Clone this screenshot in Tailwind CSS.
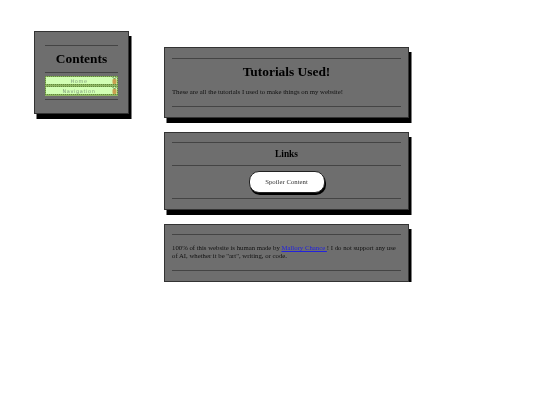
<!DOCTYPE html>
<html lang="en">
<head>
    <meta charset="UTF-8">
    <title>Tutorials Used</title>
    <script src="https://cdn.jsdelivr.net/npm/@tailwindcss/browser@4"></script>
</head>
<body class="bg-white text-black font-['Liberation_Serif',serif] text-[6.75px] leading-[8px]">
    <div class="flex items-start pl-[34px] pt-[31px] blur-[0.3px]">

        <!-- Sidebar -->
        <aside class="w-[95px] h-[83px] px-[10px] pt-[13px] bg-[#6e6e6e] border border-[#333333] shadow-[2.5px_5px_0_#000]">
            <div class="h-px bg-[#444444]"></div>
            <h2 class="h-[26px] flex items-center justify-center text-[13.4px] font-bold text-black">Contents</h2>
            <div class="h-px bg-[#444444]"></div>
            <nav class="flex flex-col gap-px pb-px mt-[3px] mb-[3px] bg-[#8fb563]">
                <a class="h-[9px] pr-[5px] flex items-center justify-center relative bg-[#d2ffb4] bg-clip-padding border border-dotted border-[#5f8a3a] text-[#7f9a7c] font-['DejaVu_Sans',sans-serif] text-[5px] tracking-[0.6px]">Home
                    <svg class="absolute right-0 top-0 w-[5px] h-[7px]" viewBox="0 0 5 7"><path d="M0.5 0L2.5 2L4.5 0" fill="none" stroke="#4d6b30" stroke-width="0.8"/><rect x="0.5" y="2" width="4" height="5" rx="1" fill="#c9a050"/></svg>
                </a>
                <a class="h-[9px] pr-[5px] flex items-center justify-center relative bg-[#d2ffb4] bg-clip-padding border border-dotted border-[#5f8a3a] text-[#7f9a7c] font-['DejaVu_Sans',sans-serif] text-[5px] tracking-[0.6px]">Navigation
                    <svg class="absolute right-0 top-0 w-[5px] h-[7px]" viewBox="0 0 5 7"><path d="M0.5 0L2.5 2L4.5 0" fill="none" stroke="#4d6b30" stroke-width="0.8"/><rect x="0.5" y="2" width="4" height="5" rx="1" fill="#c9a050"/></svg>
                </a>
            </nav>
            <div class="h-px bg-[#444444]"></div>
        </aside>

        <!-- Main column -->
        <main class="w-[245px] ml-[35px] mt-[16px] flex flex-col gap-[14px]">
            <section class="h-[71px] px-[7px] pt-[10px] bg-[#6e6e6e] border border-[#333333] shadow-[2.5px_5px_0_#000]">
                <div class="h-px bg-[#444444]"></div>
                <h1 class="h-[26px] flex items-center justify-center text-[13.4px] font-bold text-black">Tutorials Used!</h1>
                <p class="mt-[3px] text-[#111111]">These are all the tutorials I used to make things on my website!</p>
                <div class="h-px bg-[#444444] mt-[10px]"></div>
            </section>

            <section class="h-[78px] px-[7px] pt-[9px] bg-[#6e6e6e] border border-[#333333] shadow-[2.5px_5px_0_#000]">
                <div class="h-px bg-[#444444]"></div>
                <h2 class="h-[22px] flex items-center justify-center text-[9.4px] font-bold text-black">Links</h2>
                <div class="h-px bg-[#444444]"></div>
                <div class="flex justify-center mt-[5px]">
                    <button class="w-[76px] h-[22px] bg-white border border-[#222222] rounded-[10px] shadow-[1px_2px_0_#000] text-[6.75px] text-[#333333]">Spoiler Content</button>
                </div>
                <div class="h-px bg-[#444444] mt-[5px]"></div>
            </section>

            <section class="h-[58px] px-[7px] pt-[9px] bg-[#6e6e6e] border border-[#333333] shadow-[2.5px_5px_0_#000]">
                <div class="h-px bg-[#444444]"></div>
                <p class="mt-[9px] text-[#111111]">100% of this website is human made by <a class="text-[#2222dd] underline">Mallory Chance </a>! I do not support any use of AI, whether it be "art", writing, or code.</p>
                <div class="h-px bg-[#444444] mt-[10px]"></div>
            </section>
        </main>
    </div>
</body>
</html>
